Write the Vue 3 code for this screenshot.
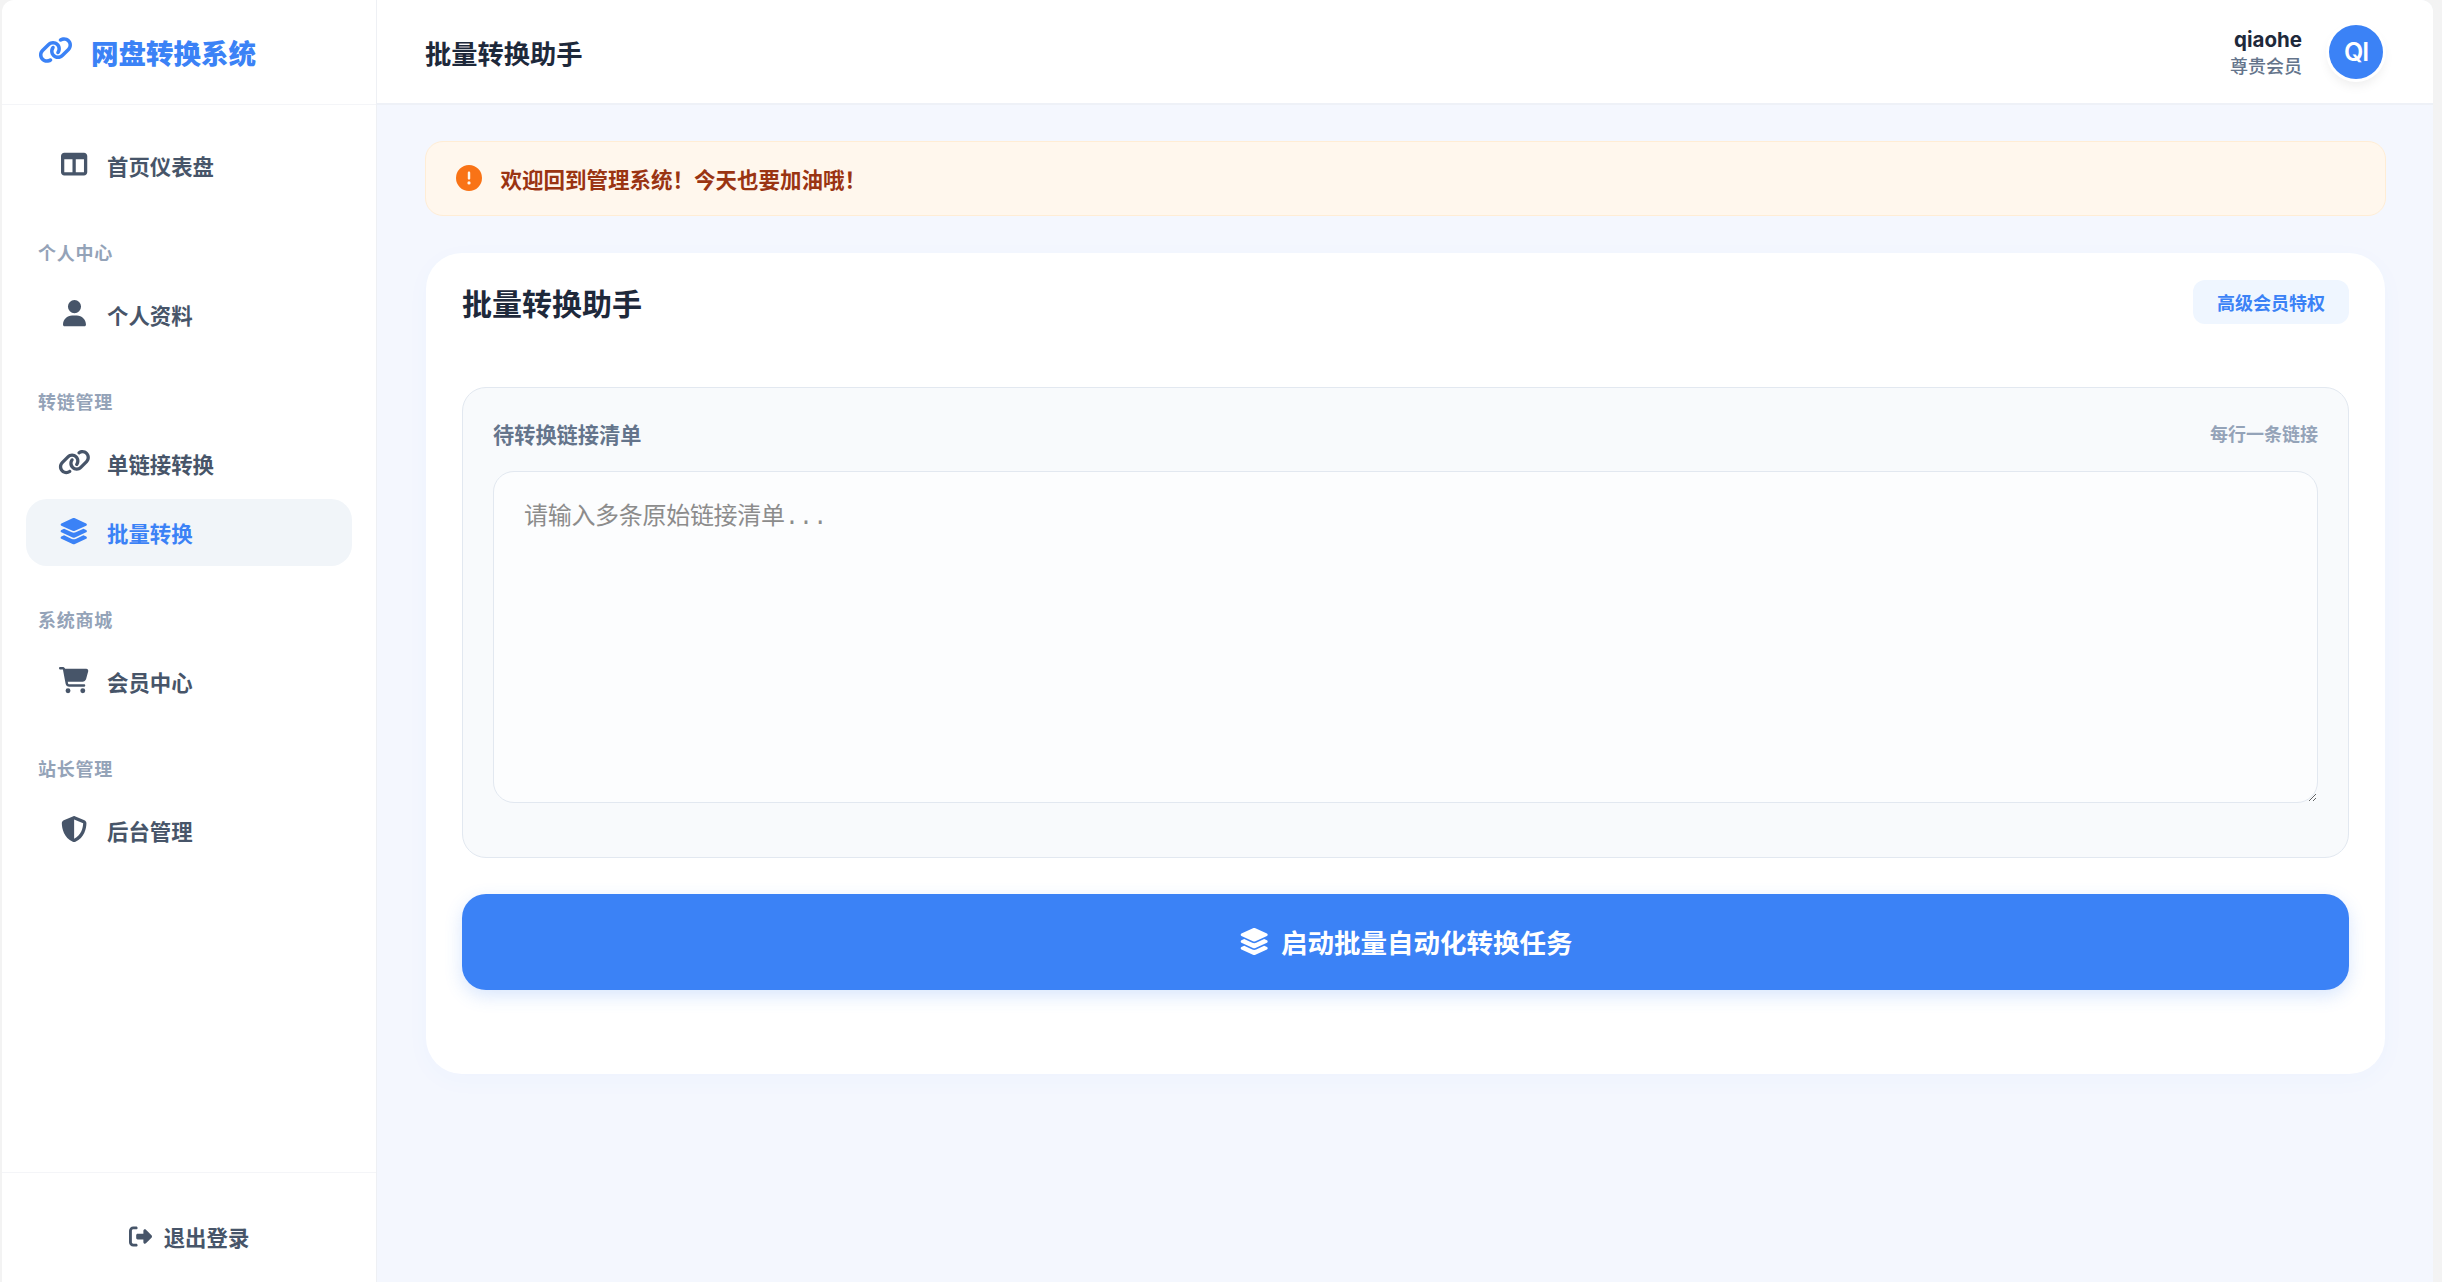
<script setup>
const icons = {
  columns: { w: 512, d: 'M0 96C0 60.7 28.7 32 64 32H448c35.3 0 64 28.7 64 64V416c0 35.3-28.7 64-64 64H64c-35.3 0-64-28.7-64-64V96zm64 64V416H224V160H64zm384 0H288V416H448V160z' },
  user: { w: 448, d: 'M224 256A128 128 0 1 0 224 0a128 128 0 1 0 0 256zm-45.7 48C79.8 304 0 383.8 0 482.3C0 498.7 13.3 512 29.7 512H418.3c16.4 0 29.7-13.3 29.7-29.7C448 383.8 368.2 304 269.7 304H178.3z' },
  link: { w: 640, d: 'M579.8 267.7c56.5-56.5 56.5-148 0-204.5c-50-50-128.8-56.5-186.3-15.4l-1.6 1.1c-14.4 10.3-17.7 30.3-7.4 44.6s30.3 17.7 44.6 7.4l1.6-1.1c32.1-22.9 76-19.3 103.8 8.6c31.5 31.5 31.5 82.5 0 114L422.3 334.8c-31.5 31.5-82.5 31.5-114 0c-27.9-27.9-31.5-71.8-8.6-103.8l1.1-1.6c10.3-14.4 6.9-34.4-7.4-44.6s-34.4-6.9-44.6 7.4l-1.1 1.6C206.5 251.2 213 330 263 380c56.5 56.5 148 56.5 204.5 0L579.8 267.7zM60.2 244.3c-56.5 56.5-56.5 148 0 204.5c50 50 128.8 56.5 186.3 15.4l1.6-1.1c14.4-10.3 17.7-30.3 7.4-44.6s-30.3-17.7-44.6-7.4l-1.6 1.1c-32.1 22.9-76 19.3-103.8-8.6C74 372 74 321 105.5 289.5L217.7 177.2c31.5-31.5 82.5-31.5 114 0c27.9 27.9 31.5 71.8 8.6 103.9l-1.1 1.6c-10.3 14.4-6.9 34.4 7.4 44.6s34.4 6.9 44.6-7.4l1.1-1.6C433.5 260.8 427 182 377 132c-56.5-56.5-148-56.5-204.5 0L60.2 244.3z' },
  layers: { w: 576, d: 'M264.5 5.2c14.9-6.9 32.1-6.9 47 0l218.6 101c8.5 3.9 13.9 12.4 13.9 21.8s-5.4 17.9-13.9 21.8l-218.6 101c-14.9 6.9-32.1 6.9-47 0L45.9 149.8C37.4 145.8 32 137.3 32 128s5.4-17.9 13.9-21.8L264.5 5.2zM476.9 209.6l53.2 24.6c8.5 3.9 13.9 12.4 13.9 21.8s-5.4 17.9-13.9 21.8l-218.6 101c-14.9 6.9-32.1 6.9-47 0L45.9 277.8C37.4 273.8 32 265.3 32 256s5.4-17.9 13.9-21.8l53.2-24.6 152 70.2c23.4 10.8 50.4 10.8 73.8 0l152-70.2zm-152 198.2l152-70.2 53.2 24.6c8.5 3.9 13.9 12.4 13.9 21.8s-5.4 17.9-13.9 21.8l-218.6 101c-14.9 6.9-32.1 6.9-47 0L45.9 405.8C37.4 401.8 32 393.3 32 384s5.4-17.9 13.9-21.8l53.2-24.6 152 70.2c23.4 10.8 50.4 10.8 73.8 0z' },
  cart: { w: 576, d: 'M0 24C0 10.7 10.7 0 24 0H69.5c22 0 41.5 12.8 50.6 32h411c26.3 0 45.5 25 38.6 50.4l-41 152.3c-8.5 31.4-37 53.3-69.5 53.3H170.7l5.4 28.5c2.2 11.3 12.1 19.5 23.6 19.5H488c13.3 0 24 10.7 24 24s-10.7 24-24 24H199.7c-34.6 0-64.3-24.6-70.7-58.5L77.4 54.5c-.7-3.8-4-6.5-7.9-6.5H24C10.7 48 0 37.3 0 24zM128 464a48 48 0 1 1 96 0 48 48 0 1 1 -96 0zm336-48a48 48 0 1 1 0 96 48 48 0 1 1 0-96z' },
  shield: { w: 512, d: 'M256 0c4.6 0 9.2 1 13.4 2.9L457.7 82.8c22 9.3 38.4 31 38.3 57.2c-.5 99.2-41.3 280.7-213.6 363.2c-16.7 8-36.1 8-52.8 0C57.3 420.7 16.5 239.2 16 140c-.1-26.2 16.3-47.9 38.3-57.2L242.7 2.9C246.8 1 251.4 0 256 0zm0 66.8V444.8C394 378 431.1 230.1 432 141.4L256 66.8l0 0z' },
  signout: { w: 512, d: 'M377.9 105.9L500.7 228.7c7.2 7.2 11.3 17.1 11.3 27.3s-4.1 20.1-11.3 27.3L377.9 406.1c-6.4 6.4-15 9.9-24 9.9c-18.7 0-33.9-15.2-33.9-33.9l0-62.1-128 0c-17.7 0-32-14.3-32-32l0-64c0-17.7 14.3-32 32-32l128 0 0-62.1c0-18.7 15.2-33.9 33.9-33.9c9 0 17.6 3.6 24 9.9zM160 96L96 96c-17.7 0-32 14.3-32 32l0 256c0 17.7 14.3 32 32 32l64 0c17.7 0 32 14.3 32 32s-14.3 32-32 32l-64 0c-53 0-96-43-96-96L0 128C0 75 43 32 96 32l64 0c17.7 0 32 14.3 32 32s-14.3 32-32 32z' },
  alert: { w: 512, d: 'M256 512A256 256 0 1 0 256 0a256 256 0 1 0 0 512zm0-384c13.3 0 24 10.7 24 24V264c0 13.3-10.7 24-24 24s-24-10.7-24-24V152c0-13.3 10.7-24 24-24zM224 352a32 32 0 1 1 64 0 32 32 0 1 1 -64 0z' }
}
const vb = (k) => `0 0 ${icons[k].w} 512`
const groups = [
  { items: [{ icon: 'columns', label: '首页仪表盘' }] },
  { title: '个人中心', items: [{ icon: 'user', label: '个人资料' }] },
  { title: '转链管理', items: [{ icon: 'link', label: '单链接转换' }, { icon: 'layers', label: '批量转换', active: true }] },
  { title: '系统商城', items: [{ icon: 'cart', label: '会员中心' }] },
  { title: '站长管理', items: [{ icon: 'shield', label: '后台管理' }] }
]
</script>

<template>
  <div class="window">
    <aside class="sidebar">
      <div class="brand">
        <svg class="brand-icon" :viewBox="vb('link')"><path :d="icons.link.d" /></svg>
        <span>网盘转换系统</span>
      </div>
      <nav class="nav">
        <div v-for="(g, i) in groups" :key="i" class="group">
          <div v-if="g.title" class="group-title">{{ g.title }}</div>
          <a v-for="it in g.items" :key="it.label" class="nav-item" :class="{ active: it.active }">
            <span class="nav-icon"><svg :viewBox="vb(it.icon)"><path :d="icons[it.icon].d" /></svg></span>
            <span>{{ it.label }}</span>
          </a>
        </div>
      </nav>
      <div class="logout">
        <svg :viewBox="vb('signout')"><path :d="icons.signout.d" /></svg>
        <span>退出登录</span>
      </div>
    </aside>
    <div class="main">
      <header class="topbar">
        <div class="top-title">批量转换助手</div>
        <div class="user">
          <div class="user-text">
            <div class="user-name">qiaohe</div>
            <div class="user-role">尊贵会员</div>
          </div>
          <div class="avatar">QI</div>
        </div>
      </header>
      <main class="content">
        <div class="notice">
          <svg :viewBox="vb('alert')"><path :d="icons.alert.d" /></svg>
          <span>欢迎回到管理系统！今天也要加油哦！</span>
        </div>
        <section class="card">
          <div class="card-head">
            <h2>批量转换助手</h2>
            <span class="badge">高级会员特权</span>
          </div>
          <div class="panel">
            <div class="panel-head">
              <span class="panel-label">待转换链接清单</span>
              <span class="panel-hint">每行一条链接</span>
            </div>
            <textarea class="input" placeholder="请输入多条原始链接清单..."></textarea>
          </div>
          <button class="submit" type="button">
            <svg :viewBox="vb('layers')"><path :d="icons.layers.d" /></svg>
            <span>启动批量自动化转换任务</span>
          </button>
        </section>
      </main>
    </div>
  </div>
</template>

<style>
html, body { margin: 0; background: #f3f3f3; }
</style>

<style scoped>
.window {
  box-sizing: border-box;
  display: flex;
  width: 2442px;
  height: 1282px;
  padding: 0 9px 0 2px;
  overflow: hidden;
  font-family: "Inter", "Noto Sans CJK SC", sans-serif;
}
.sidebar {
  box-sizing: border-box;
  flex: 0 0 375px;
  display: flex;
  flex-direction: column;
  background: #fff;
  border-right: 1.5px solid #eef0f4;
  border-top-left-radius: 12px;
}
.brand {
  box-sizing: border-box;
  height: 105px;
  flex: none;
  display: flex;
  align-items: center;
  gap: 18px;
  padding: 0 36px;
  border-bottom: 1px solid #f4f5f8;
  color: #3b82f6;
  font-size: 27.5px;
  font-weight: 800;
}
.brand-icon { width: 35px; height: 28px; fill: currentColor; margin-top: -4px; }
.nav { flex: 1; padding-top: 27px; }
.group-title {
  padding: 0 36px;
  margin: 41px 0 14px;
  color: #94a3b8;
  font-size: 18px;
  font-weight: 700;
  line-height: 27px;
  letter-spacing: .75px;
}
.nav-item {
  box-sizing: border-box;
  height: 67px;
  margin: 0 24px;
  padding: 0 36px 1px 32px;
  display: flex;
  align-items: center;
  gap: 17px;
  border-radius: 21px;
  color: #475569;
  font-size: 21.4px;
  font-weight: 600;
}
.nav-item + .nav-item { margin-top: 2px; }
.nav-item.active { background: #f1f5f9; color: #3b82f6; }
.nav-icon { width: 32px; display: flex; justify-content: center; }
.nav-icon svg { height: 26.25px; max-width: 34px; fill: currentColor; margin-top: -1px; overflow: visible; }
.logout {
  box-sizing: border-box;
  height: 110px;
  flex: none;
  display: flex;
  align-items: center;
  justify-content: center;
  gap: 12px;
  border-top: 1px solid #f4f5f8;
  color: #475569;
  font-size: 21.4px;
  font-weight: 600;
  padding-top: 18px;
}
.logout svg { width: 23px; height: 23px; fill: currentColor; margin-top: -1px; }
.main { flex: 1; min-width: 0; display: flex; flex-direction: column; background: #f4f7fe; border-top-right-radius: 12px; overflow: hidden; }
.topbar {
  box-sizing: border-box;
  height: 105px;
  flex: none;
  display: flex;
  align-items: center;
  justify-content: space-between;
  padding: 2px 50px 0 48px;
  background: #fff;
  border-bottom: 2px solid #eef1f7;
}
.top-title { color: #1e293b; font-size: 26.25px; font-weight: 700; }
.user { display: flex; align-items: center; gap: 27px; margin-top: -2px; }
.user-text { text-align: right; margin-top: 4px; }
.user-name { color: #1e293b; font-size: 20.5px; font-weight: 700; line-height: 26px; }
.user-role { color: #64748b; font-size: 18px; font-weight: 500; line-height: 27px; }
.avatar {
  width: 54px;
  height: 54px;
  border-radius: 50%;
  display: flex;
  align-items: center;
  justify-content: center;
  background: #3b82f6;
  color: #fff;
  font-size: 25px;
  font-weight: 600;
  letter-spacing: -1px;
  box-shadow: 0 0 0 3px #fff, 0 6px 12px rgba(0, 0, 0, .08);
}
.content { flex: 1; padding: 36px 48px; }
.notice {
  box-sizing: border-box;
  height: 75px;
  margin-right: -1px;
  display: flex;
  align-items: center;
  gap: 18.5px;
  padding: 0 30px 1px;
  background: #fff7ed;
  border: 1.5px solid #ffedd5;
  border-radius: 18px;
  color: #9a3412;
  font-size: 21.5px;
  font-weight: 700;
}
.notice svg { width: 26px; height: 26px; fill: #f97316; margin-top: -1px; }
.card {
  margin: 37px 0 0 1px;
  height: 821px;
  box-sizing: border-box;
  padding: 25px 36px 36px;
  background: #fff;
  border-radius: 36px;
  box-shadow: 0 6px 24px rgba(59, 130, 246, .03);
}
.card-head { display: flex; align-items: center; justify-content: space-between; height: 48px; margin-bottom: 61px; }
.card-head h2 { margin: 0; color: #1e293b; font-size: 30px; font-weight: 700; }
.badge {
  box-sizing: border-box;
  height: 44px;
  display: flex;
  align-items: center;
  padding: 0 24px;
  border-radius: 12px;
  background: #eff6ff;
  color: #3b82f6;
  font-size: 18px;
  font-weight: 700;
}
.panel {
  box-sizing: border-box;
  height: 471px;
  padding: 33px 30px 30px;
  background: #f8fafc;
  border: 1.5px solid #e2e8f0;
  border-radius: 24px;
}
.panel-head { display: flex; align-items: center; justify-content: space-between; height: 24px; margin-bottom: 26px; }
.panel-label { color: #64748b; font-size: 21.2px; font-weight: 700; }
.panel-hint { color: #94a3b8; font-size: 18px; font-weight: 600; }
.input {
  display: block;
  box-sizing: border-box;
  width: 100%;
  height: 332px;
  padding: 28px 30px 22px;
  background: #fcfdfe;
  border: 1.5px solid #e2e8f0;
  border-radius: 21px;
  outline: none;
  resize: vertical;
  font-family: "Liberation Mono", "Noto Sans CJK SC", monospace;
  font-size: 24px;
  letter-spacing: -.3px;
  line-height: 36px;
}
.input::placeholder { color: #8c8c8c; }
.submit {
  margin-top: 36px;
  width: 100%;
  height: 96px;
  display: flex;
  align-items: center;
  justify-content: center;
  gap: 12px;
  padding: 0 0 2px;
  border: 0;
  border-radius: 24px;
  background: #3b82f6;
  color: #fff;
  font-family: inherit;
  font-size: 26.5px;
  font-weight: 700;
  box-shadow: 0 6px 18px rgba(59, 130, 246, .2);
}
.submit svg { width: 30.4px; height: 27px; fill: currentColor; }
</style>
